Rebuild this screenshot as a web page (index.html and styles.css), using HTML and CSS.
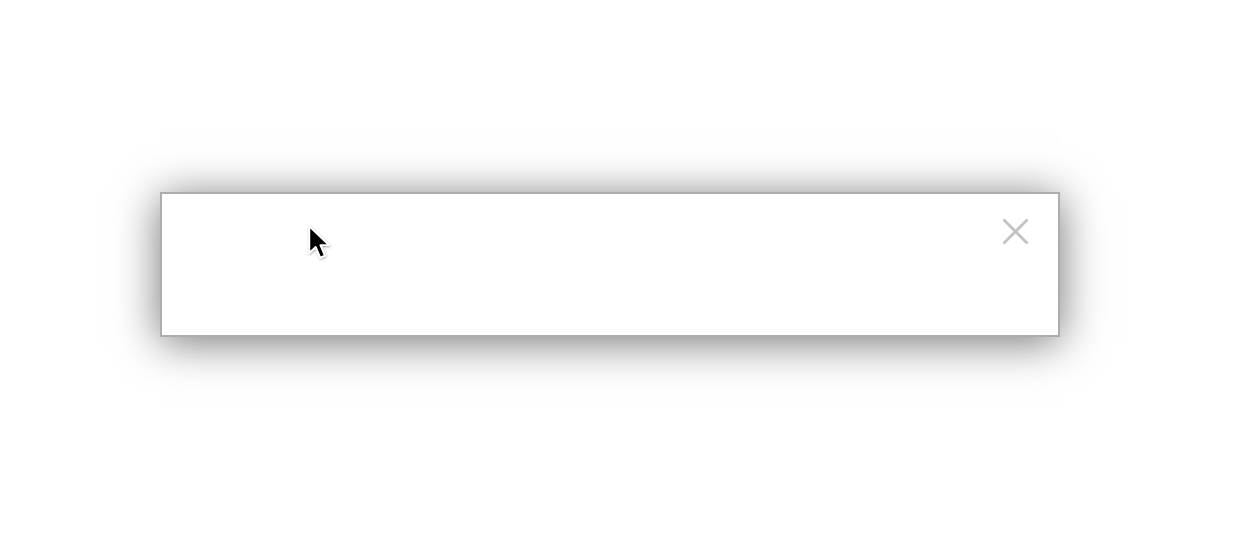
FILE: index.html
```html
<!DOCTYPE html>
<html>
<head>
<meta charset="utf-8">
<link rel="stylesheet" href="styles.css">
</head>
<body>
<div class="stage">
  <div class="dialog">
    <button class="close" aria-label="Close">
      <svg width="27" height="27" viewBox="0 0 27 27"><path d="M1.5 1.5 L25.5 25.5 M25.5 1.5 L1.5 25.5" stroke="#c2c2c2" stroke-width="2.8" fill="none"/></svg>
    </button>
  </div>
  <svg class="cursor" width="30" height="42" viewBox="0 0 26 36">
    <defs><filter id="sh" x="-30%" y="-30%" width="160%" height="160%"><feDropShadow dx="0.5" dy="1" stdDeviation="1" flood-opacity="0.35"/></filter></defs>
    <path filter="url(#sh)" d="M2 1 L2 24 L7.5 18.8 L11.5 28 L15.5 26.3 L11.6 17.3 L19 17.3 Z" fill="#000" stroke="#fff" stroke-width="1.6" stroke-linejoin="round"/>
  </svg>
</div>
</body>
</html>
```
FILE: styles.css
```css
html, body {
  margin: 0;
  padding: 0;
  background: #ffffff;
  font-family: "Liberation Sans", Arial, sans-serif;
}
.stage {
  position: relative;
  width: 1260px;
  height: 542px;
  padding: 192px 0 0 160px;
  box-sizing: border-box;
}
.dialog {
  position: relative;
  width: 900px;
  height: 145px;
  box-sizing: border-box;
  background: #ffffff;
  border: 2px solid #adadad;
  box-shadow: 0 5px 42px rgba(0, 0, 0, 0.55);
  display: flex;
  justify-content: flex-end;
  align-items: flex-start;
  padding: 24px 29px 0 0;
}
.close {
  border: 0;
  background: transparent;
  padding: 0;
  width: 27px;
  height: 27px;
  display: block;
  cursor: pointer;
}
.close svg { display: block; }
.cursor {
  position: absolute;
  left: 307px;
  top: 225px;
}
```
